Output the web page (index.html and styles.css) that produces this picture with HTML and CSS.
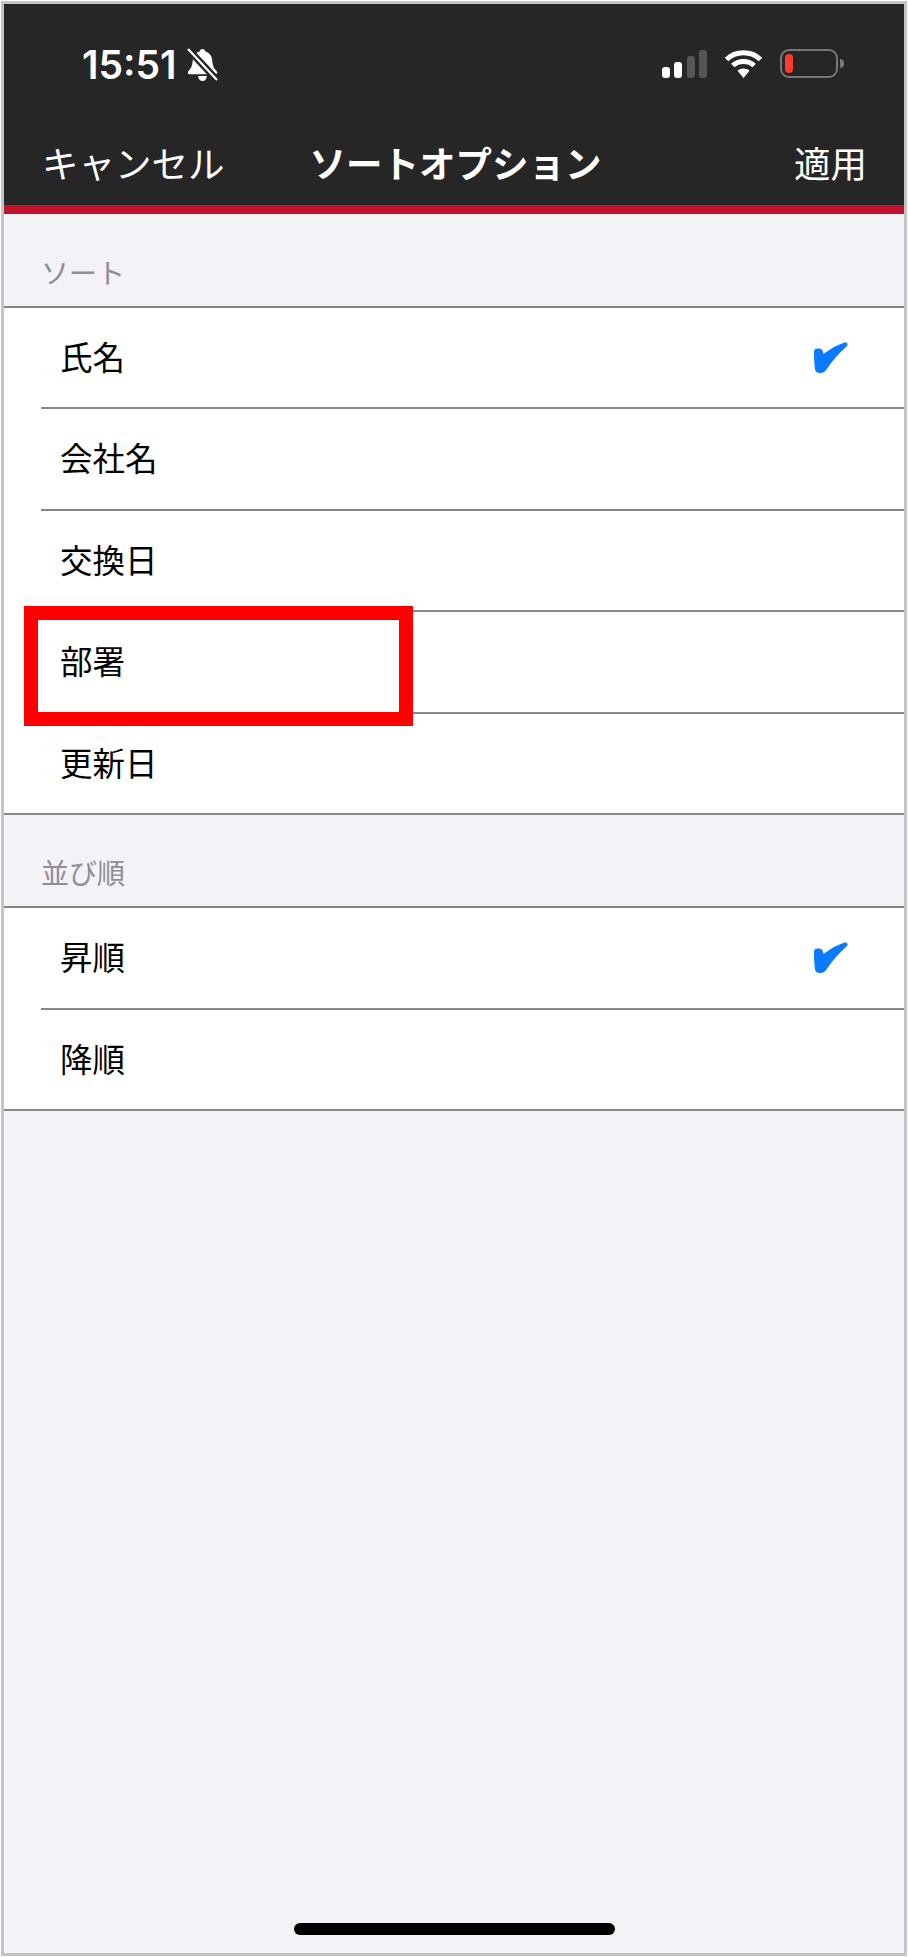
FILE: index.html
```html
<!DOCTYPE html>
<html lang="ja">
<head>
  <meta charset="UTF-8">
  <title>ソートオプション</title>
  <link rel="stylesheet" href="styles.css">
</head>

<body>
  <div class="phone">
    <header class="top">
      <div class="status">
        <div class="status-left">
          <span class="time">15:51</span>
          <svg class="bell" width="31" height="34" viewBox="0 0 31 34">
            <path fill="#fff" d="M15.500 1c-1.600 0-2.600 1.100-2.800 2.600C8.500 4.800 6.200 8 5.800 12c-.4 4.500-1 7.700-4.300 11-1 1-.9 3.300 1.300 3.300h25.400c2.200 0 2.300-2.300 1.300-3.300-3.300-3.300-3.900-6.500-4.300-11-.4-4-2.700-7.200-6.900-8.400C18.100 2.100 17.100 1 15.500 1z"/>
            <path fill="#fff" d="M11 28h9c-.4 3-2.300 5-4.500 5s-4.100-2-4.500-5z"/>
            <path stroke="#262626" stroke-width="7" d="M1 1l29 31"/>
            <path stroke="#fff" stroke-width="2.200" d="M1 1l29 31"/>
          </svg>
        </div>
        <div class="status-right">
          <div class="signal">
            <span class="bar bar-1"></span>
            <span class="bar bar-2"></span>
            <span class="bar bar-3"></span>
            <span class="bar bar-4"></span>
          </div>
          <svg class="wifi" width="39" height="29" viewBox="0 0 39 29">
            <path fill="none" stroke="#fff" stroke-width="5" d="M2.500 10.500C11.500 1.500 27.500 1.500 36.500 10.500"/>
            <path fill="none" stroke="#fff" stroke-width="5" d="M8.800 16.500C14.500 11 24.500 11 30.200 16.500"/>
            <path fill="#fff" d="M13.500 21.800C16.500 18.800 22.500 18.800 25.500 21.800L19.500 29z"/>
          </svg>
          <div class="battery">
            <div class="battery-body"><span class="battery-level"></span></div>
            <span class="battery-nub"></span>
          </div>
        </div>
      </div>
      <nav class="nav">
        <span class="nav-btn">キャンセル</span>
        <span class="nav-title">ソートオプション</span>
        <span class="nav-btn">適用</span>
      </nav>
    </header>

    <main class="content">
      <h2 class="section-label">ソート</h2>
      <ul class="list">
        <li class="row"><span>氏名</span>
          <svg class="check" width="35" height="31" viewBox="0 0 35 31">
            <path fill="#0a7aff" d="M1 10C1 7 3 6.500 5.500 6.500c3 0 4.500 1.500 5 5.500C17 7 24 3 31.500.5c2.500-.6 4 1.500 2.500 3.500C26 11 19 19 13.500 27.500 12 30 10 31 7 31c-3 0-4.500-1-5-3.500C1.300 22 1 16 1 10z"/>
          </svg>
        </li>
        <li class="row"><span>会社名</span></li>
        <li class="row"><span>交換日</span></li>
        <li class="row"><span>部署</span></li>
        <li class="row"><span>更新日</span></li>
      </ul>

      <h2 class="section-label section-label-alt">並び順</h2>
      <ul class="list">
        <li class="row"><span>昇順</span>
          <svg class="check" width="35" height="31" viewBox="0 0 35 31">
            <path fill="#0a7aff" d="M1 10C1 7 3 6.500 5.500 6.500c3 0 4.500 1.500 5 5.500C17 7 24 3 31.500.5c2.500-.6 4 1.500 2.500 3.500C26 11 19 19 13.500 27.500 12 30 10 31 7 31c-3 0-4.500-1-5-3.500C1.300 22 1 16 1 10z"/>
          </svg>
        </li>
        <li class="row"><span>降順</span></li>
      </ul>
    </main>

    <!-- Annotation drawn over the list -->
    <div class="highlight"></div>
    <div class="home-bar"></div>
  </div>
</body>
</html>
```

FILE: styles.css
```css
* { box-sizing: border-box; margin: 0; padding: 0; }

html, body {
  width: 908px;
  height: 1957px;
  background: #fff;
}

body {
  padding: 1px;
  font-family: "Noto Sans CJK JP", "Noto Sans", sans-serif;
}

/* Screenshot frame */
.phone {
  position: relative;
  width: 906px;
  height: 1955px;
  border: 3px solid #c4c4c4;
  background: #f2f2f7;
  overflow: hidden;
}

/* Dark header with red rule */
.top {
  height: 210px;
  background: #262626;
  border-bottom: 9px solid #c4122b;
  color: #fff;
}

.status {
  display: flex;
  justify-content: space-between;
  align-items: flex-start;
  height: 129px;
  padding: 44px 60px 0 78px;
}
.status-left {
  display: flex;
  align-items: center;
  gap: 11px;
  height: 34px;
}
.time {
  font-family: Inter, sans-serif;
  font-size: 39px;
  font-weight: 600;
  line-height: 34px;
}
.status-right {
  display: flex;
  align-items: flex-start;
  gap: 17px;
  padding-top: 1px;
}

.signal {
  display: flex;
  align-items: flex-end;
  gap: 4.300px;
  height: 29px;
}
.bar {
  width: 8px;
  border-radius: 3px;
  background: #fff;
}
.bar-1 { height: 11px; }
.bar-2 { height: 16px; }
.bar-3 { height: 22px; background: #565656; }
.bar-4 { height: 28px; background: #565656; }

.battery {
  display: flex;
  align-items: center;
  gap: 2px;
}
.battery-body {
  width: 58px;
  height: 29px;
  padding: 3px;
  border: 2px solid #777;
  border-radius: 9px;
}
.battery-level {
  display: block;
  width: 8px;
  height: 100%;
  border-radius: 4px;
  background: #ff3b30;
}
.battery-nub {
  width: 4px;
  height: 9px;
  border-radius: 0 4px 4px 0;
  background: #777;
}

.nav {
  display: flex;
  align-items: center;
  height: 60px;
  padding: 0 37px 0 38px;
  line-height: 60px;
}
.nav-btn {
  font-size: 36.500px;
}
.nav-title {
  flex: 1;
  margin-left: 85px;
  font-size: 36.500px;
  font-weight: 700;
}

/* Grouped lists */
.section-label {
  height: 91.500px;
  padding: 40px 0 0 37px;
  font-size: 28px;
  font-weight: 400;
  line-height: 36px;
  color: #8e8e93;
}
.section-label-alt {
  height: 91px;
  padding: 39px 0 0 37px;
}

.list {
  list-style: none;
  background: #fff;
  border-top: 2px solid #85858a;
  border-bottom: 2px solid #85858a;
}
.row {
  display: flex;
  justify-content: space-between;
  align-items: center;
  height: 101.500px;
  margin-left: 37px;
  padding: 0 56px 0 19px;
  border-bottom: 2px solid #85858a;
  font-size: 32.500px;
  color: #000;
}
.row:last-child {
  height: 99.500px;
  border-bottom: 0;
}
.row span {
  padding-bottom: 4px;
}

/* Red annotation box */
.highlight {
  position: absolute;
  left: 20px;
  top: 602px;
  width: 389px;
  height: 120px;
  border: 14px solid #f00;
}

.home-bar {
  position: absolute;
  left: 290px;
  top: 1919px;
  width: 321px;
  height: 12px;
  border-radius: 6px;
  background: #000;
}
```
